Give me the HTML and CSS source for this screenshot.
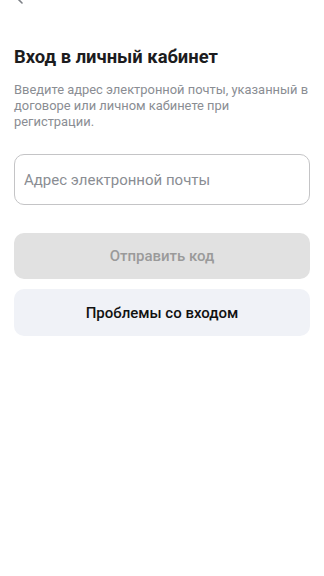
FILE: index.html
```html
<!DOCTYPE html>
<html lang="ru">
<head>
  <meta charset="UTF-8">
  <meta name="viewport" content="width=device-width, initial-scale=1.0">
  <title>Вход в личный кабинет</title>
  <link rel="stylesheet" href="styles.css">
</head>
<body>
  <div class="screen">
    <div class="top-bar">
      <button class="back-btn" aria-label="Назад">
        <svg width="24" height="24" viewBox="0 0 24 24" fill="none">
          <path d="M15 4 L7 12 L15 20" stroke="#7d8086" stroke-width="1.6" stroke-linecap="round" stroke-linejoin="round"/>
        </svg>
      </button>
    </div>

    <h1 class="title">Вход в личный кабинет</h1>
    <p class="subtitle">Введите адрес электронной почты, указанный в договоре или личном кабинете при регистрации.</p>

    <div class="field">
      <input class="field-input" type="email" placeholder="Адрес электронной почты">
    </div>

    <button class="btn btn-primary" disabled>Отправить код</button>
    <button class="btn btn-secondary">Проблемы со входом</button>
  </div>
</body>
</html>
```

FILE: styles.css
```css
* {
  margin: 0;
  padding: 0;
  box-sizing: border-box;
}

body {
  font-family: Roboto, 'Noto Sans', Arial, sans-serif;
  background: #fff;
  color: #1a1a1a;
}

.screen {
  padding: 0 14px;
  display: flex;
  flex-direction: column;
}

.top-bar {
  height: 18px;
  margin-top: -14px;
  display: flex;
  align-items: center;
}

.back-btn {
  border: none;
  background: none;
  margin-left: -7px;
  display: flex;
}

.title {
  margin-top: 41px;
  font-size: 18.4px;
  font-weight: 700;
  line-height: 24px;
  color: #1c1c1e;
}

.subtitle {
  margin-top: 13px;
  font-size: 12.9px;
  line-height: 16px;
  color: #8a8d93;
}

.field {
  margin-top: 24px;
}

.field-input {
  width: 100%;
  height: 51px;
  border: 1px solid #c4c4c6;
  border-radius: 10px;
  padding: 0 9px;
  font-family: inherit;
  font-size: 15px;
  color: #1c1c1e;
  outline: none;
}

.field-input::placeholder {
  color: #8a8d93;
}

.btn {
  width: 100%;
  height: 46px;
  border: none;
  border-radius: 10px;
  font-family: inherit;
  font-size: 15px;
  font-weight: 500;
}

.btn-primary {
  margin-top: 28px;
  background: #e1e1e1;
  color: #9a9a9a;
}

.btn-secondary {
  margin-top: 10px;
  height: 47px;
  background: #f0f2f7;
  color: #111;
}
```
